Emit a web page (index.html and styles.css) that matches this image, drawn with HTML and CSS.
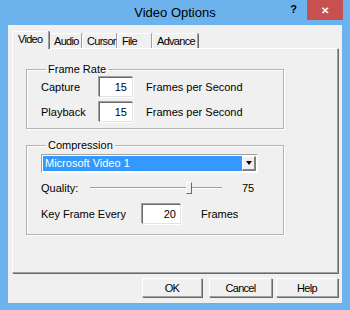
FILE: index.html
```html
<!DOCTYPE html>
<html lang="en">
<head>
    <meta charset="UTF-8">
    <title>Video Options</title>
    <link rel="stylesheet" href="styles.css">
</head>
<body>
    <div class="window">
        <div class="titlebar">
            <span></span>
            <span class="title">Video Options</span>
            <div class="controls">
                <span class="help-btn">?</span>
                <span class="close-btn">&#x2715;</span>
            </div>
        </div>

        <div class="client">
            <div class="tab-strip">
                <div class="tab selected" style="width: 37px">Video</div>
                <div class="tab" style="width: 33px">Audio</div>
                <div class="tab" style="width: 35px">Cursor</div>
                <div class="tab" style="width: 35px">File</div>
                <div class="tab" style="width: 46px">Advance</div>
            </div>

            <div class="tab-page">
                <fieldset class="group frame-rate">
                    <legend>Frame Rate</legend>
                    <div class="rate-row">
                        <span class="rate-label">Capture</span>
                        <span class="field">15</span>
                        <span class="rate-unit">Frames per Second</span>
                    </div>
                    <div class="rate-row">
                        <span class="rate-label">Playback</span>
                        <span class="field">15</span>
                        <span class="rate-unit">Frames per Second</span>
                    </div>
                </fieldset>

                <fieldset class="group compression">
                    <legend>Compression</legend>
                    <div class="combo">
                        <span class="combo-value">Microsoft Video 1</span>
                        <span class="combo-arrow"><span class="triangle"></span></span>
                    </div>
                    <div class="quality-row">
                        <span class="quality-label">Quality:</span>
                        <div class="slider">
                            <div class="track"></div>
                            <div class="thumb"></div>
                        </div>
                        <span class="quality-value">75</span>
                    </div>
                    <div class="keyframe-row">
                        <span class="keyframe-label">Key Frame Every</span>
                        <span class="field wide">20</span>
                        <span class="keyframe-unit">Frames</span>
                    </div>
                </fieldset>
            </div>

            <div class="buttons">
                <button class="btn ok">OK</button>
                <button class="btn cancel">Cancel</button>
                <button class="btn help">Help</button>
            </div>
        </div>
    </div>
</body>
</html>
```

FILE: styles.css
```css
body {
    margin: 0;
    font-family: "Liberation Sans", Arial, sans-serif;
    font-size: 11px;
    color: #000;
}
.window {
    width: 350px;
    height: 310px;
    background: #6cb3ee;
    display: flex;
    flex-direction: column;
    box-sizing: border-box;
    padding-bottom: 7px;
}
.titlebar {
    height: 25px;
    display: grid;
    grid-template-columns: 1fr auto 1fr;
    align-items: center;
}
.title {
    font-size: 13px;
    color: #000;
    margin-top: -1px;
}
.controls {
    justify-self: end;
    align-self: start;
    display: flex;
    align-items: flex-start;
    margin-right: 7px;
}
.help-btn {
    font-weight: bold;
    font-size: 11px;
    margin-top: 3px;
    margin-right: 10px;
}
.close-btn {
    width: 36px;
    height: 20px;
    background: #c75050;
    color: #fff;
    font-size: 10px;
    font-weight: bold;
    display: flex;
    align-items: center;
    justify-content: center;
}
.client {
    flex: 1;
    margin: 0 8px;
    background: #f0f0f0;
    padding: 6px 4px 0 4px;
}

/* tabs */
.tab-strip {
    height: 17px;
    display: flex;
    align-items: flex-end;
}
.tab {
    box-sizing: border-box;
    height: 15px;
    padding: 1px 0 0 4px;
    border-top: 1px solid #fff;
    border-left: 1px solid #fff;
    border-right: 1px solid #a0a0a0;
    box-shadow: 1px 0 0 #696969;
    border-radius: 2px 2px 0 0;
    white-space: nowrap;
    letter-spacing: -0.7px;
    position: relative;
}
.tab.selected {
    height: 18px;
    margin-bottom: -1px;
    padding: 1px 0 0 5px;
    background: #f0f0f0;
    z-index: 1;
}
.tab-page {
    box-sizing: border-box;
    height: 225px;
    border-top: 1px solid #fff;
    border-left: 1px solid #fff;
    border-right: 1px solid #a0a0a0;
    border-bottom: 1px solid #a0a0a0;
    box-shadow: 1px 1px 0 #696969;
    padding: 14px 0 0 13px;
}

/* group boxes */
.group {
    margin: 0;
    min-width: 0;
    width: 258px;
    box-sizing: border-box;
    border: 1px solid #b4b4b4;
    box-shadow: inset 1px 1px 0 #fff, 1px 1px 0 #fff;
    padding: 0 0 0 14px;
}
.group legend {
    padding: 0 2px;
    margin-left: 5px;
    line-height: 13px;
}
.frame-rate {
    padding-top: 1px;
    padding-bottom: 6px;
}
.rate-row {
    display: flex;
    align-items: center;
}
.rate-row + .rate-row {
    margin-top: 5px;
}
.rate-label {
    width: 58px;
    flex: none;
}
.rate-unit {
    margin-left: 13px;
    white-space: nowrap;
}
.field {
    flex: none;
    box-sizing: border-box;
    width: 34px;
    height: 20px;
    background: #fff;
    border-top: 1px solid #696969;
    border-left: 1px solid #696969;
    border-right: 1px solid #e3e3e3;
    border-bottom: 1px solid #e3e3e3;
    box-shadow: -1px -1px 0 #a0a0a0, 1px 1px 0 #fff;
    text-align: right;
    padding: 3px 5px 0 0;
}
.field.wide {
    width: 39px;
    padding-right: 4px;
}
.compression {
    margin-top: 10px;
    padding-top: 2px;
    padding-bottom: 10px;
}
.combo {
    box-sizing: border-box;
    width: 217px;
    height: 19px;
    display: flex;
    background: #fff;
    border-top: 1px solid #a0a0a0;
    border-left: 1px solid #a0a0a0;
    border-right: 1px solid #fff;
    border-bottom: 1px solid #fff;
    padding: 1px;
}
.combo-value {
    flex: 1;
    background: #3399ff;
    color: #fff;
    line-height: 15px;
    padding-left: 2px;
}
.combo-arrow {
    box-sizing: border-box;
    width: 14px;
    background: #f0f0f0;
    border-top: 1px solid #fff;
    border-left: 1px solid #fff;
    border-right: 2px solid #808080;
    border-bottom: 2px solid #808080;
    display: flex;
    align-items: center;
    justify-content: center;
}
.triangle {
    width: 0;
    height: 0;
    border-left: 3px solid transparent;
    border-right: 3px solid transparent;
    border-top: 4px solid #000;
}
.quality-row {
    display: flex;
    align-items: center;
    height: 18px;
    margin-top: 6px;
}
.quality-label {
    width: 49px;
}
.slider {
    width: 132px;
    height: 14px;
    position: relative;
}
.track {
    position: absolute;
    left: 0;
    right: 0;
    top: 6px;
    height: 1px;
    background: #a0a0a0;
    border-bottom: 1px solid #fff;
}
.thumb {
    position: absolute;
    left: 96px;
    top: 1px;
    width: 4px;
    height: 10px;
    background: #f0f0f0;
    border-top: 1px solid #fff;
    border-left: 1px solid #fff;
    border-right: 1px solid #696969;
    border-bottom: 1px solid #696969;
}
.quality-value {
    margin-left: 20px;
}
.keyframe-row {
    display: flex;
    align-items: center;
    margin-top: 7px;
}
.keyframe-label {
    width: 101px;
}
.keyframe-unit {
    margin-left: 20px;
}

/* dialog buttons */
.buttons {
    display: flex;
    justify-content: flex-end;
    margin-top: 5px;
}
.btn {
    box-sizing: border-box;
    height: 19px;
    font-family: "Liberation Sans", Arial, sans-serif;
    font-size: 11px;
    letter-spacing: -0.7px;
    background: #f0f0f0;
    border-top: 1px solid #fff;
    border-left: 1px solid #fff;
    border-right: 1px solid #a0a0a0;
    border-bottom: 1px solid #a0a0a0;
    box-shadow: 1px 1px 0 #696969;
    padding: 0;
    color: #000;
}
.btn.ok {
    width: 60px;
}
.btn.cancel {
    width: 63px;
    margin-left: 7px;
}
.btn.help {
    width: 62px;
    margin-left: 4px;
}
```
